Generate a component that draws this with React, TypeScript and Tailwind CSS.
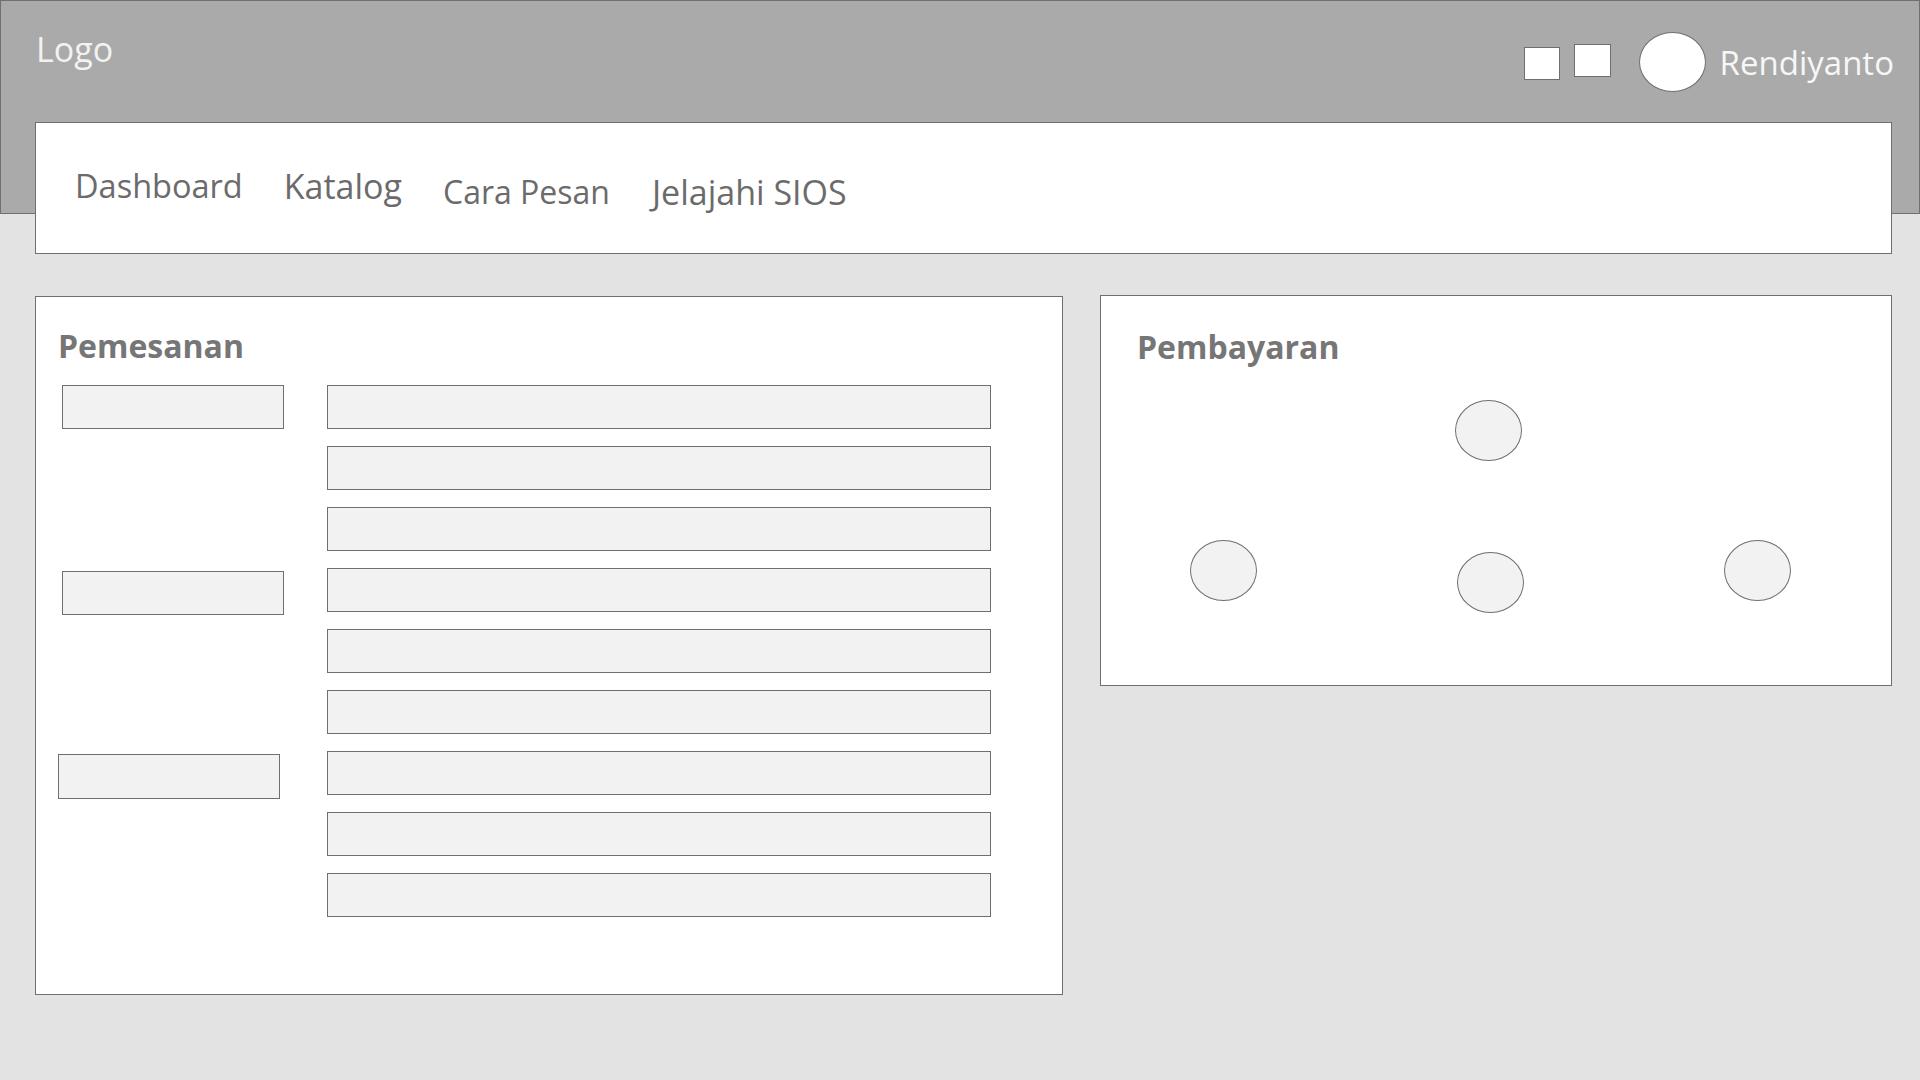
import React from "react";

const font = { fontFamily: '"Open Sans", "Noto Sans", sans-serif' };

function Row({ small, smallClass, id }: { small: boolean; smallClass?: string; id: number }) {
  return (
    <div className="flex items-start h-[44px]" key={id}>
      <div className="w-[222px] h-[44px] shrink-0 flex items-start">
        {small && (
          <div className={"bg-[#f2f2f2] border border-[#6f6f6f] " + (smallClass ?? "w-[222px] h-[44px]")} />
        )}
      </div>
      <div className="ml-[43px] w-[664px] h-[44px] bg-[#f2f2f2] border border-[#6f6f6f]" />
    </div>
  );
}

function Circle({ className = "" }: { className?: string }) {
  return <div className={"w-[67px] h-[61px] rounded-[50%] bg-[#f2f2f2] border border-[#6f6f6f] shrink-0 " + className} />;
}

export default function App() {
  const rows = [0, 1, 2, 3, 4, 5, 6, 7, 8];
  return (
    <div className="w-[1920px] h-[1080px] bg-[#e3e3e3] overflow-hidden" style={font}>
      {/* Header */}
      <div className="h-[214px] bg-[#aaaaaa] border border-[#707070] flex items-start justify-between pl-[35px] pr-[25px]">
        <div className="mt-[31px] text-[34px] leading-none text-[#f2f2f2]">Logo</div>
        <div className="flex items-start">
          <div className="mt-[46px] w-[36px] h-[33px] bg-white border border-[#6f6f6f]" />
          <div className="ml-[14px] mt-[43px] w-[37px] h-[33px] bg-white border border-[#6f6f6f]" />
          <div className="ml-[28px] mt-[31px] w-[67px] h-[60px] rounded-[50%] bg-white border border-[#6f6f6f]" />
          <div className="ml-[14px] mt-[45px] text-[33px] leading-none text-[#f7f7f7]">Rendiyanto</div>
        </div>
      </div>

      {/* Nav */}
      <div className="mx-[35px] w-[1857px] -mt-[92px] h-[132px] bg-white border border-[#6f6f6f] flex items-start pl-[39px] leading-none text-[#6b6b6b]">
        <div className="mt-[47px] text-[32.5px]">Dashboard</div>
        <div className="mt-[46px] ml-[41px] text-[34px]">Katalog</div>
        <div className="mt-[53px] ml-[41px] text-[32px]">Cara Pesan</div>
        <div className="mt-[52px] ml-[42px] text-[34px]">Jelajahi SIOS</div>
      </div>

      {/* Main */}
      <div className="flex items-start pl-[35px] mt-[42px] gap-[37px]">
        <div className="w-[1028px] h-[699px] bg-white border border-[#6f6f6f] pl-[22px] pt-[33px]">
          <div className="text-[32px] font-bold leading-none text-[#767676]">Pemesanan</div>
          <div className="mt-[23px] ml-[4px] flex flex-col gap-[17px]">
            {rows.map((i) => (
              <Row
                key={i}
                id={i}
                small={i === 0 || i === 3 || i === 6}
                smallClass={
                  i === 3
                    ? "mt-[3px] w-[222px] h-[44px]"
                    : i === 6
                    ? "mt-[3px] -ml-[4px] w-[222px] h-[45px]"
                    : undefined
                }
              />
            ))}
          </div>
        </div>

        <div className="-mt-[1px] w-[792px] h-[391px] bg-white border border-[#6f6f6f] pl-[36px] pt-[35px]">
          <div className="text-[32px] font-bold leading-none text-[#767676]">Pembayaran</div>
          <div className="mt-[37px] ml-[318px] flex">
            <Circle />
          </div>
          <div className="mt-[79px] ml-[53px] flex items-start gap-[200px]">
            <Circle />
            <Circle className="mt-[12px]" />
            <Circle />
          </div>
        </div>
      </div>
    </div>
  );
}
